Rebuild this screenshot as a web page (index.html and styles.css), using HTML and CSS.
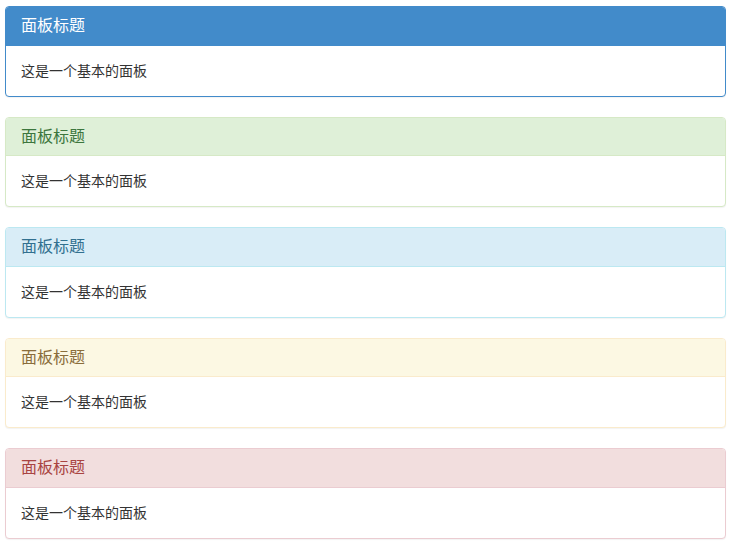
FILE: index.html
```html
<!DOCTYPE html>
<html lang="zh">
<head>
<meta charset="utf-8">
<title>面板</title>
<link rel="stylesheet" href="styles.css">
</head>
<body>
<div class="wrap">
  <div class="panel panel-primary">
    <div class="panel-heading"><h3 class="panel-title">面板标题</h3></div>
    <div class="panel-body">这是一个基本的面板</div>
  </div>
  <div class="panel panel-success">
    <div class="panel-heading"><h3 class="panel-title">面板标题</h3></div>
    <div class="panel-body">这是一个基本的面板</div>
  </div>
  <div class="panel panel-info">
    <div class="panel-heading"><h3 class="panel-title">面板标题</h3></div>
    <div class="panel-body">这是一个基本的面板</div>
  </div>
  <div class="panel panel-warning">
    <div class="panel-heading"><h3 class="panel-title">面板标题</h3></div>
    <div class="panel-body">这是一个基本的面板</div>
  </div>
  <div class="panel panel-danger">
    <div class="panel-heading"><h3 class="panel-title">面板标题</h3></div>
    <div class="panel-body">这是一个基本的面板</div>
  </div>
</div>
</body>
</html>
```
FILE: styles.css
```css
html, body {
  margin: 0;
  padding: 0;
  background: #fff;
}
body {
  font-family: "Liberation Sans", "Noto Sans CJK SC", sans-serif;
  font-size: 14px;
  line-height: 20px;
  color: #333;
}
.wrap {
  padding: 6px 5px 0 5px;
}
.panel {
  margin-bottom: 20px;
  background: #fff;
  border: 1px solid transparent;
  border-radius: 4px;
  box-shadow: 0 1px 1px rgba(0,0,0,0.05);
}
.panel-heading {
  padding: 10px 15px;
  border-bottom: 1px solid transparent;
  border-top-left-radius: 3px;
  border-top-right-radius: 3px;
}
.panel-title {
  margin: 0;
  font-size: 16px;
  font-weight: normal;
  line-height: 17.6px;
  color: inherit;
}
.panel-body {
  padding: 15px;
}
.panel-primary { border-color: #428bca; }
.panel-primary > .panel-heading { background: #428bca; border-color: #428bca; color: #fff; }
.panel-success { border-color: #d6e9c6; }
.panel-success > .panel-heading { background: #dff0d8; border-color: #d6e9c6; color: #3c763d; }
.panel-info { border-color: #bce8f1; }
.panel-info > .panel-heading { background: #d9edf7; border-color: #bce8f1; color: #31708f; }
.panel-warning { border-color: #faebcc; }
.panel-warning > .panel-heading { background: #fcf8e3; border-color: #faebcc; color: #8a6d3b; }
.panel-danger { border-color: #ebccd1; }
.panel-danger > .panel-heading { background: #f2dede; border-color: #ebccd1; color: #a94442; }
```
